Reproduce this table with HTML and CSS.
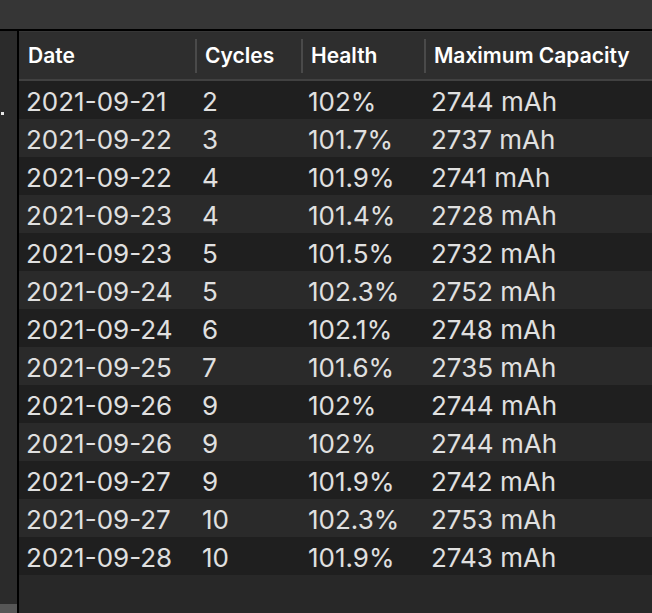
FILE: index.html
```html
<!DOCTYPE html>
<html>
<head>
<meta charset="utf-8">
<link rel="stylesheet" href="styles.css">
</head>
<body>
<div class="topbar"></div>
<div class="main">
  <div class="sidebar">
    <span class="dot"></span>
    <span class="thumb"></span>
  </div>
  <div class="table">
    <div class="head">
      <div class="hcell">Date</div>
      <div class="hcell"><span class="divider"></span>Cycles</div>
      <div class="hcell"><span class="divider"></span>Health</div>
      <div class="hcell"><span class="divider"></span>Maximum Capacity</div>
    </div>
    <div class="rows">
      <div class="row"><span>2021-09-21</span><span>2</span><span>102%</span><span>2744 mAh</span></div>
      <div class="row"><span>2021-09-22</span><span>3</span><span>101.7%</span><span>2737 mAh</span></div>
      <div class="row"><span>2021-09-22</span><span>4</span><span>101.9%</span><span>2741 mAh</span></div>
      <div class="row"><span>2021-09-23</span><span>4</span><span>101.4%</span><span>2728 mAh</span></div>
      <div class="row"><span>2021-09-23</span><span>5</span><span>101.5%</span><span>2732 mAh</span></div>
      <div class="row"><span>2021-09-24</span><span>5</span><span>102.3%</span><span>2752 mAh</span></div>
      <div class="row"><span>2021-09-24</span><span>6</span><span>102.1%</span><span>2748 mAh</span></div>
      <div class="row"><span>2021-09-25</span><span>7</span><span>101.6%</span><span>2735 mAh</span></div>
      <div class="row"><span>2021-09-26</span><span>9</span><span>102%</span><span>2744 mAh</span></div>
      <div class="row"><span>2021-09-26</span><span>9</span><span>102%</span><span>2744 mAh</span></div>
      <div class="row"><span>2021-09-27</span><span>9</span><span>101.9%</span><span>2742 mAh</span></div>
      <div class="row"><span>2021-09-27</span><span>10</span><span>102.3%</span><span>2753 mAh</span></div>
      <div class="row"><span>2021-09-28</span><span>10</span><span>101.9%</span><span>2743 mAh</span></div>
    </div>
  </div>
</div>
</body>
</html>
```
FILE: styles.css
```css
* { box-sizing: border-box; }
html, body {
  margin: 0;
  padding: 0;
  height: 613px;
  overflow: hidden;
  background: #282828;
  font-family: Inter, "Noto Sans", sans-serif;
}
.topbar {
  height: 31px;
  background: #363636;
  border-bottom: 2px solid #000;
}
.main {
  display: flex;
  height: 582px;
}
.sidebar {
  width: 19px;
  flex: none;
  background: #2b2b2b;
  border-right: 2px solid #000;
  display: flex;
  flex-direction: column;
  justify-content: space-between;
  padding-top: 81px;
}
.dot {
  display: block;
  width: 3px;
  height: 3px;
  margin-left: 1px;
  background: #e6e6e6;
}
.thumb {
  display: block;
  height: 9px;
  background: #565656;
}
.table {
  flex: 1;
  display: flex;
  flex-direction: column;
  background: #282828;
}
.head {
  display: grid;
  grid-template-columns: 176px 106px 123px 1fr;
  height: 50px;
  background: #2e2e2e;
  border-top: 1px solid #363636;
  border-bottom: 2px solid #414141;
}
.hcell {
  display: flex;
  align-items: center;
  color: #fff;
  font-size: 21px;
  font-weight: 600;
  padding-left: 9px;
}
.hcell .divider {
  width: 2px;
  height: 34px;
  background: #4a4a4a;
  margin-left: -9px;
  margin-right: 8px;
}
.row {
  display: grid;
  grid-template-columns: 176px 106px 123px 1fr;
  height: 38px;
  padding-top: 2px;
  align-items: center;
  color: #e0e0e0;
  font-size: 26px;
  background: #2a2a2a;
}
.row:nth-child(odd) {
  background: #1f1f1f;
}
.row span {
  padding-left: 7px;
  white-space: nowrap;
}
```
